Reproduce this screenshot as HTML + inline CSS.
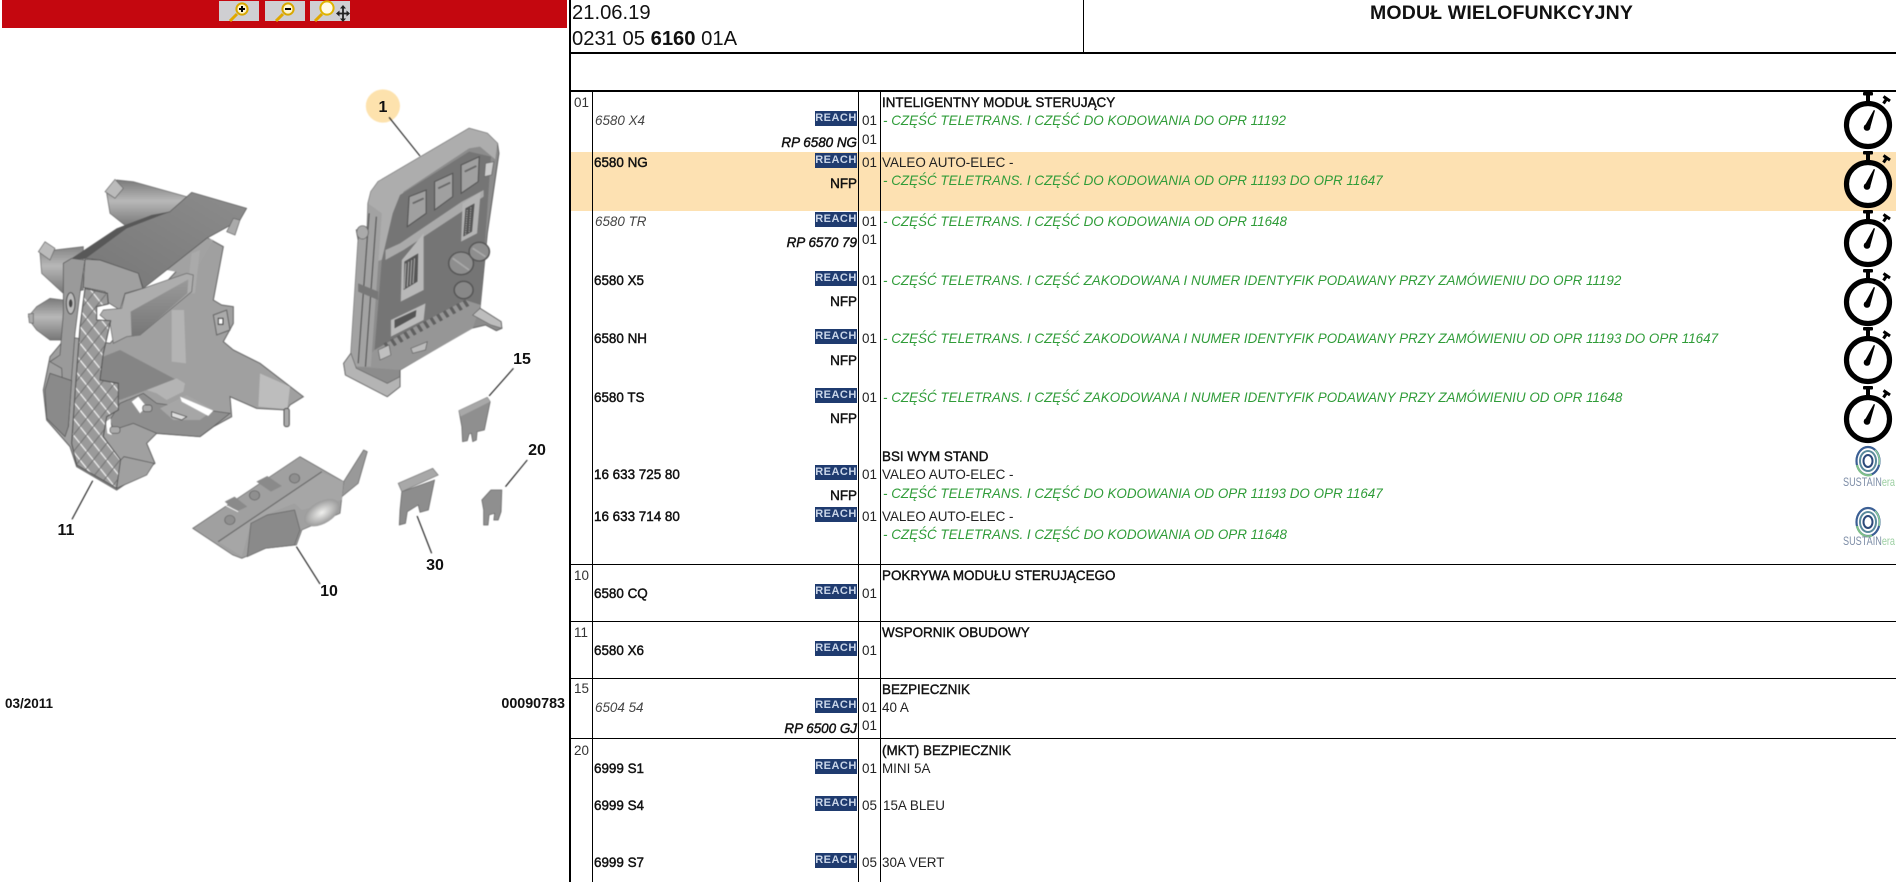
<!DOCTYPE html>
<html lang="pl"><head><meta charset="utf-8"><title>MODUŁ WIELOFUNKCYJNY</title>
<style>
html,body{margin:0;padding:0;background:#fff}
body{position:relative;width:1896px;height:882px;overflow:hidden;font-family:"Liberation Sans",Arial,sans-serif;font-size:13.43px;color:#111}
.a,.t,.g,.n,.pb,.pi,.r,.q,.c,.b,.rp{position:absolute;white-space:nowrap;height:16px;line-height:16px}
.t,.a,.g,.pb,.pi,.rp,.n{margin-top:1px}
.l{position:absolute;background:#000}
.t{left:882px;-webkit-text-stroke:.4px #111}
.a{left:882px;color:#222}
.g{left:883px;color:#2f9c38;font-style:italic}
.pb{left:594px;-webkit-text-stroke:.45px #111}
.pi{left:595px;font-style:italic;color:#444}
.rp{right:1039px;font-style:italic;-webkit-text-stroke:.45px #111}
.n{right:1039px;-webkit-text-stroke:.45px #111}
.q{left:862px;color:#222}
.c{left:574px;color:#333}
.r{left:815px;width:42px;height:15px;line-height:14px;background:#1f3b6f;color:#c9d5e8;font-weight:bold;font-size:11px;letter-spacing:.5px;text-align:center;overflow:hidden}
.h{position:absolute;left:572px;font-size:20.2px;line-height:24px;height:24px;white-space:nowrap;color:#111}
svg{position:absolute;overflow:visible}
</style></head><body>
<div style="position:absolute;left:2px;top:0;width:565px;height:28px;background:#c4070f"></div>

<svg style="left:0;top:0" width="570" height="30" viewBox="0 0 570 30">
<g><rect x="219" y="1" width="40" height="20" fill="#cfcfd2"/><path d="M237 14L230 21" stroke="#e0a800" stroke-width="3"/><circle cx="242" cy="9" r="5.600" fill="#fff6d0" stroke="#d8a800" stroke-width="2"/><path d="M239 9h6M242 6v6" stroke="#000" stroke-width="2"/></g>
<g><rect x="265" y="1" width="40" height="20" fill="#cfcfd2"/><path d="M283 14L276 21" stroke="#e0a800" stroke-width="3"/><circle cx="288" cy="9" r="5.600" fill="#fff6d0" stroke="#d8a800" stroke-width="2"/><path d="M285 9h6" stroke="#000" stroke-width="2"/></g>
<g><rect x="310" y="1" width="40" height="20" fill="#cfcfd2"/><path d="M322 14L315 21" stroke="#e0a800" stroke-width="3"/><circle cx="327" cy="8" r="6.600" fill="#fffbe8" stroke="#e0b400" stroke-width="2"/><path d="M343 8v11M338 13.500h10" stroke="#222" stroke-width="1.800"/><path d="M343 5l-3 3.500h6zM343 22l-3-3.500h6zM336 13.500l3.500-3v6zM350 13.500l-3.500-3v6z" fill="#222"/></g>
</svg>

<!-- bracket 11 -->
<svg style="left:0;top:0;filter:blur(.6px)" width="570" height="720" viewBox="0 0 570 720">
<defs>
<linearGradient id="m1" x1="0" y1="0" x2="0" y2="1"><stop offset="0" stop-color="#7a7a7a"/><stop offset=".45" stop-color="#b8b8b8"/><stop offset="1" stop-color="#777"/></linearGradient>
<linearGradient id="top" x1="0" y1="1" x2="1" y2="0"><stop offset="0" stop-color="#777"/><stop offset="1" stop-color="#8c8c8c"/></linearGradient>
<linearGradient id="frn" x1="0" y1="0" x2="0" y2="1"><stop offset="0" stop-color="#9a9a9a"/><stop offset="1" stop-color="#767676"/></linearGradient>
<pattern id="mesh" width="40" height="50" patternUnits="userSpaceOnUse">
<rect width="40" height="50" fill="#9a9a9a"/><path d="M-10 -12.500L50 62.500M-50 -12.500L10 62.500M30 -12.500L90 62.500" stroke="#f8f8f8" stroke-width="3.500"/><path d="M-10 62.500L50 -12.500M-50 62.500L10 -12.500M30 62.500L90 -12.500" stroke="#6a6a6a" stroke-width="2.500"/>
</pattern>
<radialGradient id="bulb"><stop offset="0" stop-color="#f0f0ee"/><stop offset="1" stop-color="#9a9a9a"/></radialGradient>
</defs>
<g transform="translate(0,160) scale(.33333)">
<polygon points="575,280 625,235 670,260 640,420 665,435 700,440 700,490 670,545 700,570 780,610 910,710 870,735 860,750 770,745 690,710 695,770 640,800 600,830 470,820 440,850 465,910 350,990 230,920 210,860 140,780 130,690 150,590 200,530 330,550 560,300" fill="#a0a0a0" stroke="#666" stroke-width="3"/>
<polygon points="500,330 620,235 640,240 580,345" fill="#a2a2a2"/>
<polygon points="780,640 870,680 862,748 775,740" fill="#bdbdbd"/>
<rect x="852" y="745" width="16" height="55" rx="7" fill="#aaa" stroke="#555" stroke-width="3"/>
<polygon points="515,450 552,450 558,610 515,605" fill="#b4b4b4"/>
<polygon points="575,280 600,270 585,400 560,400" fill="#aaa"/>
<polygon points="640,465 680,450 690,510 650,525" fill="#aaa" stroke="#666" stroke-width="3"/>
<rect x="655" y="475" width="14" height="18" fill="#fff" stroke="#444" stroke-width="3"/>
<polygon points="310,590 360,570 530,660 440,690 360,720 300,670" fill="#858585"/>
<polygon points="440,690 530,655 555,670 550,695 500,720 470,700" fill="#b4b4b4"/>
<polygon points="360,730 430,700 470,730 690,760 640,800 600,830 470,820 400,790 340,810 330,780" fill="#8f8f8f" stroke="#555" stroke-width="2"/>
<polygon points="480,745 560,705 640,750 600,780 520,780" fill="#a6a6a6"/>
<polygon points="540,710 640,752 625,768 545,725" fill="#fff"/>
<polygon points="395,725 415,710 440,740 420,760" fill="#fff"/>
<polygon points="318,785 332,775 335,825 322,820" fill="#fff"/>
<polygon points="515,755 560,770 545,780 515,770" fill="#ddd" stroke="#444" stroke-width="2"/>
<rect x="330" y="800" width="30" height="20" rx="8" fill="#aaa" stroke="#555" stroke-width="2"/>
<rect x="428" y="735" width="28" height="20" rx="8" fill="#aaa" stroke="#555" stroke-width="2"/>
<polygon points="85,470 110,440 150,415 190,420 190,540 150,540 110,510 95,490" fill="url(#m1)" stroke="#666" stroke-width="2"/>
<polygon points="85,462 100,460 100,490 88,488" fill="#aaa" stroke="#666" stroke-width="2"/>
<polygon points="120,280 135,250 165,270 250,260 250,390 190,400 125,340" fill="url(#m1)" stroke="#666" stroke-width="2"/>
<polygon points="115,275 135,245 165,265 150,300" fill="#bbb" stroke="#666" stroke-width="2"/>
<polygon points="320,100 350,60 400,65 560,110 520,170 380,200 330,160" fill="url(#m1)" stroke="#666" stroke-width="2"/>
<polygon points="315,95 345,58 370,85 345,115" fill="#bbb" stroke="#666" stroke-width="2"/>
<polygon points="510,155 575,97 740,145 720,180 620,235 500,330 430,385 415,340 300,300 255,295 380,195" fill="url(#top)" stroke="#555" stroke-width="2"/>
<polygon points="212,297 350,205 455,165 510,155 380,205 255,297" fill="#585858"/>
<polygon points="255,298 300,300 415,340 428,385 375,400 360,450 320,425 315,395 250,382" fill="#a0a0a0" stroke="#555" stroke-width="2"/>
<polygon points="700,175 720,180 705,225 680,215" fill="#aaa" stroke="#666" stroke-width="2"/>
<polygon points="310,450 365,445 375,402 430,385 560,340 580,345 575,395 420,525 380,530 340,550 330,490 300,465" fill="#adadad" stroke="#666" stroke-width="2"/>
<polygon points="392,455 565,358 562,400 420,525 395,530" fill="url(#frn)"/>
<polygon points="190,310 215,295 255,300 240,400 225,520 215,650 205,800 195,800 185,625 150,605 180,585 190,460" fill="#9a9a9a" stroke="#555" stroke-width="2"/>
<ellipse cx="212" cy="430" rx="13" ry="32" fill="#bbb" stroke="#555" stroke-width="3"/>
<ellipse cx="212" cy="430" rx="5" ry="12" fill="#444"/>
<polygon points="135,690 150,640 215,662 205,800 195,830 140,775" fill="#8a8a8a" stroke="#555" stroke-width="2"/>
<polygon points="255,385 322,400 325,432 290,440 290,480 332,482 310,580 300,660 355,670 355,750 320,770 310,830 362,900 350,985 230,915 215,850 225,700 240,500" fill="url(#mesh)" stroke="#555" stroke-width="3"/>
<polygon points="350,985 362,900 372,890 462,910 440,945" fill="#a0a0a0" stroke="#555" stroke-width="2"/>
</g>
</svg>

<!-- module, fuses, cover, labels -->
<svg style="left:0;top:0;filter:blur(.5px)" width="570" height="720" viewBox="0 0 570 720">
<g transform="scale(.36364,.33333)">
<ellipse cx="1053" cy="318" rx="47" ry="50" fill="#fde2ad"/>
<path d="M1070 352L1155 468M1412 1105L1345 1188M1450 1380L1390 1460M255 1442L198 1558M1147 1548L1187 1660M815 1640L880 1752" stroke="#111" stroke-width="3" fill="none"/>
<!-- module -->
<polygon points="1020,575 1040,545 1290,385 1340,400 1368,430 1372,460 1340,700 1320,925 1378,965 1380,985 1365,992 1335,975 1295,985 1100,1110 1100,1160 1065,1190 950,1125 945,1090 965,1060 985,720 980,690 1010,680 1012,610" fill="#8c8c8c" stroke="#666" stroke-width="3"/>
<polygon points="1020,575 1040,545 1290,385 1340,400 1368,430 1362,478 1320,440 1290,445 1110,575 1085,640 1062,775 1020,790 1012,610" fill="#adadad"/>
<polygon points="1100,585 1290,455 1350,470 1322,915 1060,1090 1030,1050 1050,780 1080,640" fill="#757575"/>
<polygon points="1030,1050 1150,975 1280,900 1322,915 1300,985 1100,1110 980,1100" fill="#969696"/>
<polygon points="985,720 1010,680 1012,610 1050,640 1020,1100 965,1100 965,1060" fill="#a2a2a2"/>
<path d="M1015 640L985 1090M1035 650L1005 1100" stroke="#555" stroke-width="3"/>
<polygon points="985,850 1040,875 1040,900 985,875" fill="#777"/>
<polygon points="1060,780 1110,750 1270,635 1330,590 1330,570 1270,605 1100,730 1060,750" fill="#aaa"/>
<polygon points="1125,590 1172,570 1172,640 1120,680" fill="#a0a0a0" stroke="#555" stroke-width="3"/>
<polygon points="1195,545 1245,520 1245,590 1195,630" fill="#a0a0a0" stroke="#555" stroke-width="3"/>
<polygon points="1268,495 1318,470 1315,545 1268,580" fill="#a0a0a0" stroke="#555" stroke-width="3"/>
<path d="M1135 610L1165 595M1205 565L1238 548M1278 515L1310 498" stroke="#666" stroke-width="5"/>
<polygon points="1335,490 1358,485 1352,525 1332,530" fill="#ccc" stroke="#666" stroke-width="2"/>
<polygon points="1105,780 1165,700 1165,870 1102,905" fill="#b8b8b8"/>
<polygon points="1112,785 1150,760 1148,845 1110,870" fill="#555"/>
<path d="M1116 790L1112 866M1124 785L1120 860M1132 780L1128 855M1140 775L1136 850" stroke="#aaa" stroke-width="3"/>
<polygon points="1272,610 1322,575 1312,700 1268,725" fill="#b4b4b4"/>
<polygon points="1280,625 1305,610 1298,695 1274,710" fill="#555"/>
<path d="M1285 630L1280 704M1295 622L1290 698" stroke="#aaa" stroke-width="3" stroke-dasharray="4 3"/>
<circle cx="1268" cy="790" r="34" fill="#8e8e8e" stroke="#555" stroke-width="4"/>
<circle cx="1318" cy="755" r="28" fill="#8e8e8e" stroke="#555" stroke-width="4"/>
<circle cx="1275" cy="870" r="26" fill="#888" stroke="#555" stroke-width="4"/>
<path d="M1245 775L1290 810M1300 745L1335 770" stroke="#aaa" stroke-width="5"/>
<polygon points="1075,960 1170,910 1165,960 1075,1010" fill="#bbb"/>
<polygon points="1085,960 1145,930 1143,950 1085,985" fill="#555"/>
<path d="M1060 1040L1290 905" stroke="#606060" stroke-width="22" stroke-dasharray="9 12"/>
<polygon points="1040,1050 1070,1035 1075,1065 1045,1080" fill="#c0c0c0" stroke="#666" stroke-width="2"/>
<polygon points="1130,1045 1175,1025 1170,1050 1135,1060" fill="#bbb" stroke="#666" stroke-width="2"/>
<polygon points="950,1125 945,1090 965,1060 980,1105 1065,1150 1100,1130 1100,1160 1065,1190" fill="#b4b4b4" stroke="#666" stroke-width="2"/>
<polygon points="1320,925 1378,965 1380,985 1350,975 1300,945" fill="#bdbdbd" stroke="#666" stroke-width="2"/>
<ellipse cx="997" cy="697" rx="16" ry="20" fill="#aaa" stroke="#666" stroke-width="2"/>
<!-- fuse 15 -->
<polygon points="1262,1232 1340,1192 1348,1205 1332,1290 1312,1295 1310,1320 1300,1325 1296,1300 1290,1302 1285,1322 1272,1325 1270,1280" fill="#8f8f8f" stroke="#666" stroke-width="2"/>
<polygon points="1262,1232 1340,1192 1348,1205 1266,1250" fill="#a8a8a8"/>
<!-- fuse 30 -->
<polygon points="1105,1475 1195,1440 1178,1530 1155,1537 1150,1515 1120,1535 1115,1570 1098,1575 1100,1530" fill="#8d8d8d" stroke="#666" stroke-width="2"/>
<polygon points="1095,1450 1190,1405 1205,1425 1105,1475" fill="#a8a8a8" stroke="#777" stroke-width="2"/>
<!-- fuse 20 -->
<polygon points="1325,1500 1350,1470 1380,1470 1378,1535 1370,1560 1358,1560 1360,1540 1345,1545 1342,1575 1330,1575 1330,1530" fill="#8f8f8f" stroke="#666" stroke-width="2"/>
<!-- cover 10 -->
<polygon points="945,1445 1000,1350 1010,1355 985,1450 940,1490" fill="#999" stroke="#666" stroke-width="2"/>
<polygon points="530,1585 825,1370 945,1445 935,1540 830,1590 815,1635 730,1645 665,1675 640,1665" fill="#a0a0a0" stroke="#666" stroke-width="2"/>
<polygon points="600,1625 880,1415 945,1445 940,1500 830,1530 810,1510 730,1545 690,1570 665,1670" fill="#a6a6a6"/>
<path d="M600 1625L885 1415" stroke="#666" stroke-width="3"/>
<polygon points="690,1570 735,1545 810,1530 825,1590 810,1635 730,1645 680,1670" fill="#8a8a8a" stroke="#666" stroke-width="2"/>
<ellipse cx="885" cy="1538" rx="55" ry="32" transform="rotate(-35 885 1538)" fill="url(#bulb)"/>
<circle cx="632" cy="1560" r="14" fill="#8f8f8f" stroke="#666" stroke-width="2"/>
<circle cx="700" cy="1486" r="14" fill="#8f8f8f" stroke="#666" stroke-width="2"/>
<circle cx="810" cy="1435" r="14" fill="#8f8f8f" stroke="#666" stroke-width="2"/>
<polygon points="618,1505 645,1490 680,1520 650,1535" fill="#8a8a8a"/>
<polygon points="705,1445 735,1428 775,1458 745,1475" fill="#8a8a8a"/>
<path d="M618 1515L655 1535" stroke="#fff" stroke-width="3"/>
</g>
</svg>
<svg style="left:0;top:0" width="570" height="720" viewBox="0 0 570 720" font-family="Liberation Sans, Arial, sans-serif" font-weight="bold" fill="#111">
<text x="383" y="112" font-size="16" text-anchor="middle">1</text>
<text x="522" y="364" font-size="16" text-anchor="middle">15</text>
<text x="537" y="455" font-size="16" text-anchor="middle">20</text>
<text x="66" y="535" font-size="16" text-anchor="middle">11</text>
<text x="435" y="570" font-size="16" text-anchor="middle">30</text>
<text x="329" y="596" font-size="16" text-anchor="middle">10</text>
<text x="5" y="708" font-size="13.500">03/2011</text>
<text x="565" y="708" font-size="14.300" text-anchor="end">00090783</text>
</svg>

<!-- table lines -->
<div class="l" style="left:569px;top:0;width:2px;height:882px"></div>
<div class="l" style="left:1083px;top:0;width:1px;height:53px"></div>
<div class="l" style="left:571px;top:52px;width:1325px;height:2px"></div>
<div style="position:absolute;left:571px;top:152px;width:1325px;height:59px;background:#fde1b2"></div>
<div class="l" style="left:571px;top:90px;width:1325px;height:2px"></div>
<div class="l" style="left:592px;top:92px;width:1px;height:790px"></div>
<div class="l" style="left:858px;top:92px;width:1px;height:790px"></div>
<div class="l" style="left:880px;top:92px;width:1px;height:790px"></div>
<div class="l" style="left:571px;top:564px;width:1325px;height:1px"></div>
<div class="l" style="left:571px;top:621px;width:1325px;height:1px"></div>
<div class="l" style="left:571px;top:678px;width:1325px;height:1px"></div>
<div class="l" style="left:571px;top:738px;width:1325px;height:1px"></div>

<!-- header -->
<div class="h" style="top:1px">21.06.19</div>
<div class="h" style="top:27px">0231 05 <b>6160</b> 01A</div>
<div style="position:absolute;left:1370px;top:1px;font-size:19.500px;line-height:24px;font-weight:bold;color:#111;white-space:nowrap;letter-spacing:.15px">MODUŁ WIELOFUNKCYJNY</div>

<!-- col 1 -->
<span class="c" style="top:95px">01</span>
<span class="c" style="top:568px">10</span>
<span class="c" style="top:625px">11</span>
<span class="c" style="top:681px">15</span>
<span class="c" style="top:743px">20</span>

<!-- parts -->
<span class="pi" style="top:112px">6580 X4</span>
<span class="pb" style="top:154px">6580 NG</span>
<span class="pi" style="top:213px">6580 TR</span>
<span class="pb" style="top:272px">6580 X5</span>
<span class="pb" style="top:330px">6580 NH</span>
<span class="pb" style="top:389px">6580 TS</span>
<span class="pb" style="top:466px">16 633 725 80</span>
<span class="pb" style="top:508px">16 633 714 80</span>
<span class="pb" style="top:585px">6580 CQ</span>
<span class="pb" style="top:642px">6580 X6</span>
<span class="pi" style="top:699px">6504 54</span>
<span class="pb" style="top:760px">6999 S1</span>
<span class="pb" style="top:797px">6999 S4</span>
<span class="pb" style="top:854px">6999 S7</span>

<!-- reach -->
<span class="r" style="top:111px">REACH</span>
<span class="r" style="top:153px">REACH</span>
<span class="r" style="top:212px">REACH</span>
<span class="r" style="top:271px">REACH</span>
<span class="r" style="top:329px">REACH</span>
<span class="r" style="top:388px">REACH</span>
<span class="r" style="top:465px">REACH</span>
<span class="r" style="top:507px">REACH</span>
<span class="r" style="top:584px">REACH</span>
<span class="r" style="top:641px">REACH</span>
<span class="r" style="top:698px">REACH</span>
<span class="r" style="top:759px">REACH</span>
<span class="r" style="top:796px">REACH</span>
<span class="r" style="top:853px">REACH</span>

<!-- replacements -->
<span class="rp" style="top:134px">RP 6580 NG</span>
<span class="n" style="top:175px">NFP</span>
<span class="rp" style="top:234px">RP 6570 79</span>
<span class="n" style="top:293px">NFP</span>
<span class="n" style="top:352px">NFP</span>
<span class="n" style="top:410px">NFP</span>
<span class="n" style="top:487px">NFP</span>
<span class="rp" style="top:720px">RP 6500 GJ</span>

<!-- qty -->
<span class="q" style="top:113px">01</span>
<span class="q" style="top:132px">01</span>
<span class="q" style="top:155px">01</span>
<span class="q" style="top:214px">01</span>
<span class="q" style="top:232px">01</span>
<span class="q" style="top:273px">01</span>
<span class="q" style="top:331px">01</span>
<span class="q" style="top:390px">01</span>
<span class="q" style="top:467px">01</span>
<span class="q" style="top:509px">01</span>
<span class="q" style="top:586px">01</span>
<span class="q" style="top:643px">01</span>
<span class="q" style="top:700px">01</span>
<span class="q" style="top:718px">01</span>
<span class="q" style="top:761px">01</span>
<span class="q" style="top:798px">05</span>
<span class="q" style="top:855px">05</span>

<!-- descriptions -->
<span class="t" style="top:94px">INTELIGENTNY MODUŁ STERUJĄCY</span>
<span class="g" style="top:112px">- CZĘŚĆ TELETRANS. I CZĘŚĆ DO KODOWANIA DO OPR 11192</span>
<span class="a" style="top:154px">VALEO AUTO-ELEC -</span>
<span class="g" style="top:172px">- CZĘŚĆ TELETRANS. I CZĘŚĆ DO KODOWANIA OD OPR 11193 DO OPR 11647</span>
<span class="g" style="top:213px">- CZĘŚĆ TELETRANS. I CZĘŚĆ DO KODOWANIA OD OPR 11648</span>
<span class="g" style="top:272px">- CZĘŚĆ TELETRANS. I CZĘŚĆ ZAKODOWANA I NUMER IDENTYFIK PODAWANY PRZY ZAMÓWIENIU DO OPR 11192</span>
<span class="g" style="top:330px">- CZĘŚĆ TELETRANS. I CZĘŚĆ ZAKODOWANA I NUMER IDENTYFIK PODAWANY PRZY ZAMÓWIENIU OD OPR 11193 DO OPR 11647</span>
<span class="g" style="top:389px">- CZĘŚĆ TELETRANS. I CZĘŚĆ ZAKODOWANA I NUMER IDENTYFIK PODAWANY PRZY ZAMÓWIENIU OD OPR 11648</span>
<span class="t" style="top:448px">BSI WYM STAND</span>
<span class="a" style="top:466px">VALEO AUTO-ELEC -</span>
<span class="g" style="top:485px">- CZĘŚĆ TELETRANS. I CZĘŚĆ DO KODOWANIA OD OPR 11193 DO OPR 11647</span>
<span class="a" style="top:508px">VALEO AUTO-ELEC -</span>
<span class="g" style="top:526px">- CZĘŚĆ TELETRANS. I CZĘŚĆ DO KODOWANIA OD OPR 11648</span>
<span class="t" style="top:567px">POKRYWA MODUŁU STERUJĄCEGO</span>
<span class="t" style="top:624px">WSPORNIK OBUDOWY</span>
<span class="t" style="top:681px">BEZPIECZNIK</span>
<span class="a" style="top:699px">40 A</span>
<span class="t" style="top:742px">(MKT) BEZPIECZNIK</span>
<span class="a" style="top:760px">MINI 5A</span>
<span class="a" style="top:797px;left:883px">15A BLEU</span>
<span class="a" style="top:854px">30A VERT</span>

<!-- stopwatches -->
<svg width="0" height="0" style="left:0;top:0"><defs>
<g id="w">
<circle cx="0" cy="0" r="21.500" fill="#fff" stroke="#000" stroke-width="5.200"/>
<rect x="-2" y="-30" width="4" height="8" fill="#000"/>
<rect x="-5" y="-33" width="10" height="3.500" rx="1" fill="#000"/>
<path d="M15.500 -21.500L18.500 -26" stroke="#000" stroke-width="3"/>
<path d="M15.500 -28.500L22 -24" stroke="#000" stroke-width="3"/>
<path d="M-3.500 1.500L5.800 -15 7 -14.500 2 3.500z" fill="#000"/>
<circle cx="-1" cy="2.500" r="3.300" fill="#000"/>
</g>
<g id="s">
<ellipse cx="0" cy="0" rx="11.500" ry="14" fill="none" stroke="#3b5f94" stroke-width="2.200"/>
<ellipse cx="0" cy="0" rx="8" ry="10" fill="none" stroke="#5a8a9c" stroke-width="2"/>
<ellipse cx="0" cy="0" rx="4.500" ry="6" fill="#fff" stroke="#2d4a7a" stroke-width="2"/>
<path d="M-11 4A11.500 14 0 0 0 4 13.500" fill="none" stroke="#7fc08a" stroke-width="2.200"/>
<path d="M7 -11A11.500 14 0 0 1 11 4" fill="none" stroke="#8ccf9b" stroke-width="1.500"/>
</g>
</defs></svg>
<svg style="left:1780px;top:0" width="116" height="470" viewBox="1780 0 116 470">
<use href="#w" x="1868" y="125"/>
<use href="#w" x="1868" y="184"/>
<use href="#w" x="1868" y="243"/>
<use href="#w" x="1868" y="302"/>
<use href="#w" x="1868" y="360"/>
<use href="#w" x="1868" y="419"/>
</svg>
<svg style="left:1830px;top:440px;filter:blur(.35px)" width="66" height="115" viewBox="1830 440 66 115">
<use href="#s" x="1868" y="461"/>
<use href="#s" x="1868" y="522"/>
<text x="1843" y="486" font-family="Liberation Sans, sans-serif" font-size="12" textLength="52" lengthAdjust="spacingAndGlyphs" fill="#7c8ca6">SUSTAIN<tspan fill="#9ccfa2">era</tspan></text>
<text x="1843" y="545" font-family="Liberation Sans, sans-serif" font-size="12" textLength="52" lengthAdjust="spacingAndGlyphs" fill="#7c8ca6">SUSTAIN<tspan fill="#9ccfa2">era</tspan></text>
</svg>
</body></html>
